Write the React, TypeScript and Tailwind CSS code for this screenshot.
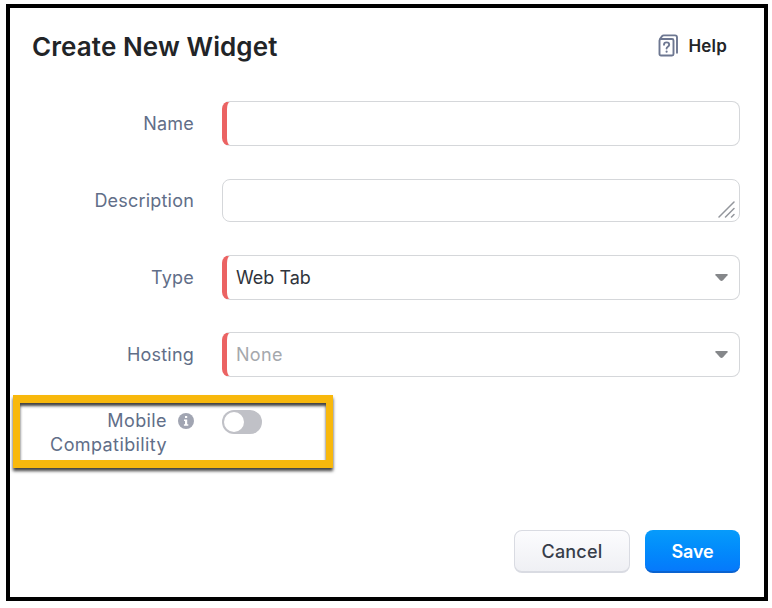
import React, { useState } from 'react';

interface FormRowProps {
  label: string;
  children: React.ReactNode;
}

// Label on the left, control on the right
const FormRow: React.FC<FormRowProps> = ({ label, children }) => (
  <div className="flex items-center">
    <span className="w-[184px] text-right text-lg leading-6 tracking-[0.2px] text-[#616e88]">{label}</span>
    <div className="ml-7 w-[518px]">{children}</div>
  </div>
);

interface SelectBoxProps {
  value: string;
  placeholder?: boolean;
}

const SelectBox: React.FC<SelectBoxProps> = ({ value, placeholder = false }) => (
  <button
    type="button"
    className="flex h-[45px] w-full items-center justify-between rounded-lg border border-l-[5px] border-[#d5d7da] border-l-[#eb6363] pr-[11px] pl-[9px] text-lg"
  >
    <span className={placeholder ? 'tracking-[0.3px] text-[#a5a8ad]' : 'text-[#30343c]'}>{value}</span>
    <svg width="13" height="7" viewBox="0 0 13 7" fill="#85878a">
      <path d="M1 0h11c.8 0 1 .6.5 1.200L8 6.200c-.9.9-2.100.9-3 0L.5 1.200C0 .6.200 0 1 0z" />
    </svg>
  </button>
);

const HelpIcon: React.FC = () => (
  <svg width="22" height="24" viewBox="0 0 22 24" fill="none" stroke="#6d7791" strokeWidth="1.900" strokeLinecap="round" strokeLinejoin="round">
    <rect x="1.500" y="5" width="14" height="16.500" rx="1.500" />
    <path d="M2.300 4.500 4.100 2.200Q4.700 1.400 5.700 1.400H17Q19 1.400 19 3.400V18.800" />
    <path d="M6 10.800c0-3.200 5.200-3.200 5.200 0 0 2-2.600 1.900-2.600 3.700" />
    <path d="M8.600 17.600v.1" strokeWidth="2.100" />
  </svg>
);

const InfoIcon: React.FC = () => (
  <svg width="16" height="16" viewBox="0 0 16 16">
    <circle cx="8" cy="8" r="8" fill="#a1a5b2" />
    <path d="M7 3h2.200v2H7zM6 6.500h3.200v4.700h1.100v1.500H5.900v-1.500H7V8H6z" fill="#fff" />
  </svg>
);

const App: React.FC = () => {
  const [mobile, setMobile] = useState(false);

  return (
    <div className="h-[608px] w-[772px] bg-white pt-1 pl-1.5 font-['Inter','Liberation_Sans',sans-serif]">
      <div className="flex h-[597px] w-[762px] flex-col border-4 border-black">
        <header className="flex h-[76px] items-center justify-between pt-0.5 pr-[37px] pl-[22px]">
          <h1 className="text-[26px] leading-8 font-semibold tracking-[0.1px] text-[#222427]">Create New Widget</h1>
          <a className="flex items-center gap-2">
            <span className="mb-0.5">
              <HelpIcon />
            </span>
            <span className="text-[17px] font-semibold tracking-[0.2px] text-[#222427]">Help</span>
          </a>
        </header>

        <form className="mt-[17px] flex flex-col">
          <FormRow label="Name">
            <input className="block h-[45px] w-full rounded-lg border border-l-[5px] border-[#d5d7da] border-l-[#eb6363] px-3 text-lg outline-none" />
          </FormRow>
          <div className="mt-[33px]">
            <FormRow label="Description">
              <div className="flex h-[43px] w-full items-end justify-end rounded-lg border border-[#d5d7da] pr-1 pb-[3px]">
                {/* resize handle */}
                <svg width="18" height="18" viewBox="0 0 18 18" stroke="#93969c" strokeWidth="1.500" strokeLinecap="round">
                  <path d="M2 17 17 2M8.500 17l8.500-8.500M14.500 17l2.500-2.500" />
                </svg>
              </div>
            </FormRow>
          </div>
          <div className="mt-[33px]">
            <FormRow label="Type">
              <SelectBox value="Web Tab" />
            </FormRow>
          </div>
          <div className="mt-8">
            <FormRow label="Hosting">
              <SelectBox value="None" placeholder />
            </FormRow>
          </div>

          {/* highlighted option */}
          <div className="mt-[18px] ml-[3px] flex h-[73px] w-[320px] items-start border-[8px] border-r-[7px] border-l-[7px] border-[#f8b80c] pt-[6px] shadow-[0_3px_3px_rgba(0,0,0,0.75),inset_0_3px_3px_rgba(0,0,0,0.75)]">
            <span className="w-[147px] text-right text-lg leading-6 tracking-[0.4px] text-[#616e88]">
              Mobile Compatibility
            </span>
            <span className="mt-1 ml-[11px]">
              <InfoIcon />
            </span>
            <button
              type="button"
              role="switch"
              aria-checked={mobile}
              onClick={() => setMobile(!mobile)}
              className={`mt-px ml-7 flex h-6 w-10 items-center rounded-full px-0.5 ${mobile ? 'justify-end bg-[#0a8cff]' : 'bg-[#c0c1c7]'}`}
            >
              <span className="h-5 w-5 rounded-full bg-white" />
            </button>
          </div>
        </form>

        <footer className="mt-[62px] flex justify-end gap-[15px] pr-6">
          <button type="button" className="h-[43px] w-[116px] rounded-lg border border-b-2 border-[#d9dbe2] bg-linear-to-b from-[#fcfcfe] to-[#eff0f4] pt-0.5 text-lg font-medium tracking-[0.2px] text-[#373d49]">
            Cancel
          </button>
          <button type="button" className="h-[43px] w-[95px] rounded-lg border-b-2 border-[#0a63d0] bg-linear-to-b from-[#079bfb] to-[#0679fb] pt-0.5 text-lg font-semibold tracking-[-0.1px] text-white">
            Save
          </button>
        </footer>
      </div>
    </div>
  );
};

export default App;
